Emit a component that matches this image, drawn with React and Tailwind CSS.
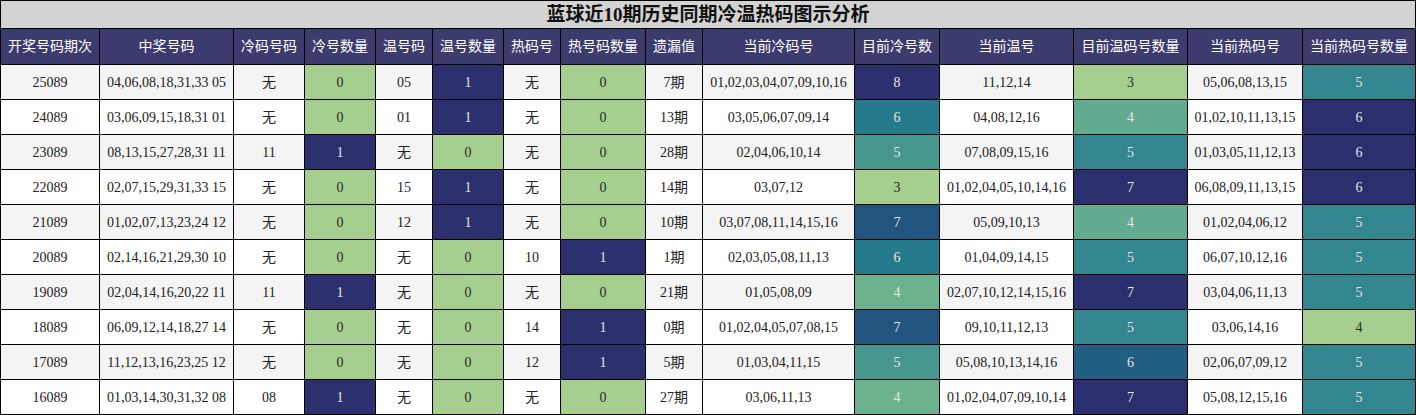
import React from "react";

const headers = [
  "开奖号码期次", "中奖号码", "冷码号码", "冷号数量", "温号码", "温号数量", "热码号", "热号码数量",
  "遗漏值", "当前冷码号", "目前冷号数", "当前温号", "目前温码号数量", "当前热码号", "当前热码号数量",
];

const widths = [99, 134, 71, 71, 57, 71, 57, 85, 57, 152, 85, 134, 114, 115, 113];

const rows = [
  ["25089", "04,06,08,18,31,33 05", "无", 0, "05", 1, "无", 0, "7期", "01,02,03,04,07,09,10,16", 8, "11,12,14", 3, "05,06,08,13,15", 5],
  ["24089", "03,06,09,15,18,31 01", "无", 0, "01", 1, "无", 0, "13期", "03,05,06,07,09,14", 6, "04,08,12,16", 4, "01,02,10,11,13,15", 6],
  ["23089", "08,13,15,27,28,31 11", "11", 1, "无", 0, "无", 0, "28期", "02,04,06,10,14", 5, "07,08,09,15,16", 5, "01,03,05,11,12,13", 6],
  ["22089", "02,07,15,29,31,33 15", "无", 0, "15", 1, "无", 0, "14期", "03,07,12", 3, "01,02,04,05,10,14,16", 7, "06,08,09,11,13,15", 6],
  ["21089", "01,02,07,13,23,24 12", "无", 0, "12", 1, "无", 0, "10期", "03,07,08,11,14,15,16", 7, "05,09,10,13", 4, "01,02,04,06,12", 5],
  ["20089", "02,14,16,21,29,30 10", "无", 0, "无", 0, "10", 1, "1期", "02,03,05,08,11,13", 6, "01,04,09,14,15", 5, "06,07,10,12,16", 5],
  ["19089", "02,04,14,16,20,22 11", "11", 1, "无", 0, "无", 0, "21期", "01,05,08,09", 4, "02,07,10,12,14,15,16", 7, "03,04,06,11,13", 5],
  ["18089", "06,09,12,14,18,27 14", "无", 0, "无", 0, "14", 1, "0期", "01,02,04,05,07,08,15", 7, "09,10,11,12,13", 5, "03,06,14,16", 4],
  ["17089", "11,12,13,16,23,25 12", "无", 0, "无", 0, "12", 1, "5期", "01,03,04,11,15", 5, "05,08,10,13,14,16", 6, "02,06,07,09,12", 5],
  ["16089", "01,03,14,30,31,32 08", "08", 1, "无", 0, "无", 0, "27期", "03,06,11,13", 4, "01,02,04,07,09,10,14", 7, "05,08,12,15,16", 5],
];

// crest-like palette, keyed by position on the column's scale (x100)
const palette = [
  [0, "bg-[#a6ce8f] text-[#2a2a2a]"],
  [20, "bg-[#6cb28f] text-[#e4e4e4]"],
  [25, "bg-[#62aa90] text-[#e4e4e4]"],
  [40, "bg-[#45978e] text-[#e4e4e4]"],
  [50, "bg-[#338690] text-[#e4e4e4]"],
  [60, "bg-[#277a8c] text-[#e4e4e4]"],
  [75, "bg-[#225e84] text-[#e4e4e4]"],
  [80, "bg-[#225480] text-[#e4e4e4]"],
  [100, "bg-[#2c2f6e] text-[#e4e4e4]"],
];

function colorFor(v, min, max) {
  const t = max === min ? 0 : Math.round(((v - min) / (max - min)) * 100);
  let best = palette[0];
  for (const p of palette) {
    if (Math.abs(p[0] - t) < Math.abs(best[0] - t)) best = p;
  }
  return best[1];
}

const heatCols = [3, 5, 7, 10, 12, 14];
const ranges = {};
heatCols.forEach((c) => {
  const vals = rows.map((r) => r[c]);
  ranges[c] = [Math.min(...vals), Math.max(...vals)];
});

export default function App() {
  return (
    <div className="w-[1416px] h-[415px] bg-white overflow-hidden">
      <table
        className="table-fixed border-collapse w-[1416px] text-[14px] text-[#222]"
        style={{ fontFamily: "'Liberation Serif', 'Noto Sans CJK SC', serif" }}
      >
        <colgroup>
          {widths.map((w, i) => (
            <col key={i} style={{ width: w }} />
          ))}
        </colgroup>
        <tbody>
          <tr className="h-[28px]">
            <td
              colSpan={15}
              className="border border-black bg-[#d3d3d3] text-center font-bold text-[19px] text-[#111] leading-none p-0"
            >
              蓝球近10期历史同期冷温热码图示分析
            </td>
          </tr>
          <tr className="h-[36px]">
            {headers.map((h, i) => (
              <td
                key={i}
                className="border border-black bg-[#3c3b6e] text-white text-center text-[14px] p-0 whitespace-nowrap"
              >
                {h}
              </td>
            ))}
          </tr>
          {rows.map((r, ri) => (
            <tr key={ri} className={ri % 2 === 0 ? "h-[35px] bg-[#f4f4f4]" : "h-[35px] bg-white"}>
              {r.map((cell, ci) => {
                const heat = heatCols.includes(ci);
                const cls = heat ? colorFor(cell, ranges[ci][0], ranges[ci][1]) : "";
                return (
                  <td
                    key={ci}
                    className={`border border-black text-center p-0 whitespace-nowrap ${cls}`}
                  >
                    {cell}
                  </td>
                );
              })}
            </tr>
          ))}
        </tbody>
      </table>
    </div>
  );
}
